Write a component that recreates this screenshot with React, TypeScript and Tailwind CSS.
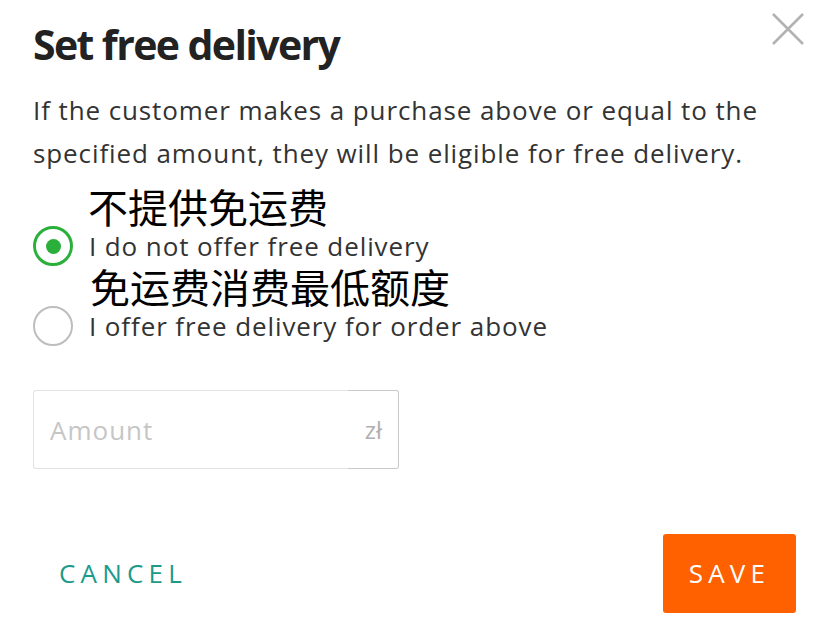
import React, { useState } from "react";

const App = () => {
  const [choice, setChoice] = useState<"none" | "above">("none");
  const [amount, setAmount] = useState("");

  return (
    <div
      className="relative w-[828px] h-[636px] bg-white pt-[20px] pl-[33px] pr-[32px] text-[#333]"
      style={{ fontFamily: '"Open Sans", "Noto Sans CJK SC", sans-serif' }}
    >
      <button className="absolute left-[771px] top-[12px] w-[34px] h-[34px]" aria-label="Close">
        <svg viewBox="0 0 34 34" className="w-[34px] h-[34px]">
          <path d="M2 2 L32 32 M32 2 L2 32" stroke="#b2b2b2" strokeWidth="2.6" fill="none" />
        </svg>
      </button>

      <h1 className="text-[41px] leading-[48px] font-bold text-[#222] tracking-[-1.6px]">Set free delivery</h1>

      <p className="mt-[21px] text-[26px] leading-[43px] tracking-[0.9px] text-[#333]">
        If the customer makes a purchase above or equal to the specified amount, they will be eligible for free
        delivery.
      </p>

      <div className="mt-[11px] flex flex-col">
        <label className="flex flex-col cursor-pointer" onClick={() => setChoice("none")}>
          <span
            className="pl-[55px] text-[40px] leading-[40px] text-black"
            style={{ fontFamily: '"Noto Sans CJK SC", sans-serif' }}
          >
            不提供免运费
          </span>
          <span className="flex items-center h-[40px] gap-[16px]">
            <span
              className={
                choice === "none"
                  ? "w-[40px] h-[40px] rounded-full border-[3px] border-[#2aaf3a] flex items-center justify-center"
                  : "w-[40px] h-[40px] rounded-full border-2 border-[#bdbdbd]"
              }
            >
              {choice === "none" && <span className="w-[15px] h-[15px] rounded-full bg-[#2aaf3a]" />}
            </span>
            <span className="text-[26px] leading-[30px] tracking-[0.9px]">I do not offer free delivery</span>
          </span>
        </label>

        <label className="flex flex-col cursor-pointer" onClick={() => setChoice("above")}>
          <span
            className="pl-[57px] text-[40px] leading-[40px] text-black"
            style={{ fontFamily: '"Noto Sans CJK SC", sans-serif' }}
          >
            免运费消费最低额度
          </span>
          <span className="flex items-center h-[40px] gap-[16px]">
            <span
              className={
                choice === "above"
                  ? "w-[40px] h-[40px] rounded-full border-[3px] border-[#2aaf3a] flex items-center justify-center"
                  : "w-[40px] h-[40px] rounded-full border-2 border-[#bdbdbd]"
              }
            >
              {choice === "above" && <span className="w-[15px] h-[15px] rounded-full bg-[#2aaf3a]" />}
            </span>
            <span className="text-[26px] leading-[30px] tracking-[0.9px]">I offer free delivery for order above</span>
          </span>
        </label>
      </div>

      <div className="mt-[44px] flex w-[366px] h-[79px]">
        <input
          value={amount}
          onChange={(e) => setAmount(e.target.value)}
          placeholder="Amount"
          className="w-[315px] h-full border border-r-0 border-[#e3e3e3] rounded-l-[3px] pl-[16px] text-[26px] tracking-[1px] text-[#333] placeholder:text-[#c6c6c6] outline-none"
        />
        <span className="flex-1 h-full border border-l-0 border-[#c9c9c9] rounded-r-[3px] flex items-center justify-end pr-[16px] text-[24px] text-[#b0b0b0]">
          zł
        </span>
      </div>

      <div className="mt-[65px] flex items-center justify-between">
        <button className="h-[79px] pl-[26px] pr-[16px] text-[26px] tracking-[0.2em] text-[#1c9a8b]">CANCEL</button>
        <button className="w-[133px] h-[79px] bg-[#ff6000] rounded-[3px] text-[26px] tracking-[0.2em] text-white">
          SAVE
        </button>
      </div>
    </div>
  );
};

export default App;
